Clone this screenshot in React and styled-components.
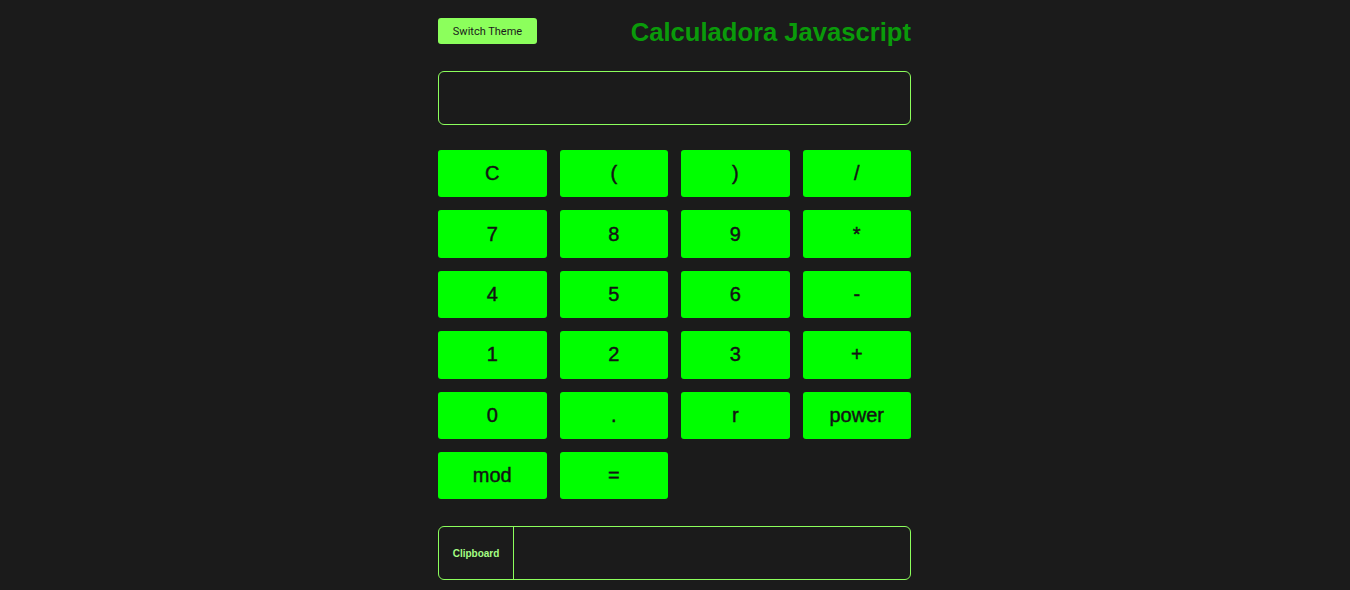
import React from "react";
import styled, { createGlobalStyle } from "styled-components";

const Global = createGlobalStyle`
  html, body { margin: 0; padding: 0; background: #1b1b1b; }
  body { font-family: "Liberation Sans", Arial, sans-serif; }
`;

const Page = styled.div`
  width: 473px;
  margin-left: calc(50% - 237px);
  padding-top: 18px;
  display: flex;
  flex-direction: column;
`;

const Header = styled.header`
  display: flex;
  justify-content: space-between;
  align-items: flex-start;
  height: 26px;
`;

const ThemeButton = styled.button`
  width: 99px;
  height: 26px;
  background: #8cff5c;
  border: none;
  border-radius: 3px;
  font-family: Roboto, "Liberation Sans", sans-serif;
  font-size: 11px;
  color: #1b1b1b;
  padding: 0;
  cursor: pointer;
`;

const Title = styled.h1`
  margin: 0;
  font-family: "Liberation Sans", Arial, sans-serif;
  font-weight: bold;
  font-size: 25.6px;
  line-height: 28px;
  color: #0a9b0a;
`;

const Display = styled.input`
  box-sizing: border-box;
  margin-top: 27px;
  width: 473px;
  height: 54px;
  background: transparent;
  border: 1px solid #8cff5c;
  border-radius: 6px;
  color: #8cff5c;
  font-family: "Liberation Sans", Arial, sans-serif;
  font-size: 22px;
  padding: 0 12px;
  outline: none;
`;

const Keys = styled.div`
  margin-top: 25px;
  display: grid;
  grid-template-columns: repeat(4, 1fr);
  grid-auto-rows: 47.4px;
  column-gap: 13px;
  row-gap: 13px;
`;

const Key = styled.button`
  background: #00ff00;
  border: none;
  border-radius: 3px;
  font-family: "Liberation Sans", Arial, sans-serif;
  font-size: 20px;
  color: #141414;
  -webkit-text-stroke: 0.45px #141414;
  padding: 0;
  cursor: pointer;
`;

const Clipboard = styled.div`
  box-sizing: border-box;
  margin-top: 27px;
  height: 54px;
  border: 1px solid #8cff5c;
  border-radius: 6px;
  display: flex;
`;

const ClipLabel = styled.div`
  width: 74px;
  border-right: 1px solid #8cff5c;
  display: flex;
  align-items: center;
  justify-content: center;
  padding-top: 1px;
  font-family: "Liberation Sans", Arial, sans-serif;
  font-weight: bold;
  font-size: 10px;
  color: #a4ff84;
`;

const ClipValue = styled.div`
  flex: 1;
`;

const keys = [
  "C", "(", ")", "/",
  "7", "8", "9", "*",
  "4", "5", "6", "-",
  "1", "2", "3", "+",
  "0", ".", "r", "power",
  "mod", "=",
];

export default function App() {
  return (
    <>
      <Global />
      <Page>
        <Header>
          <ThemeButton>Switch Theme</ThemeButton>
          <Title>Calculadora Javascript</Title>
        </Header>
        <Display readOnly value="" />
        <Keys>
          {keys.map((k) => (
            <Key key={k}>{k}</Key>
          ))}
        </Keys>
        <Clipboard>
          <ClipLabel>Clipboard</ClipLabel>
          <ClipValue />
        </Clipboard>
      </Page>
    </>
  );
}
